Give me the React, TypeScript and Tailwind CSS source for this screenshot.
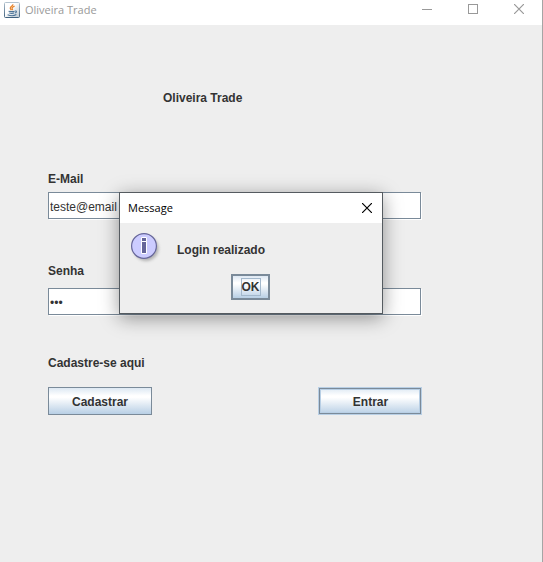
import type { ReactNode } from "react";

function JavaIcon() {
  return (
    <svg width="16" height="16" viewBox="0 0 16 16" aria-hidden="true">
      <defs>
        <linearGradient id="javaFrame" x1="0" y1="0" x2="0" y2="1">
          <stop offset="0" stopColor="#b3c3cf" />
          <stop offset="1" stopColor="#3f617f" />
        </linearGradient>
        <linearGradient id="javaFill" x1="0" y1="0" x2="1" y2="1">
          <stop offset="0.4" stopColor="#ffffff" />
          <stop offset="1" stopColor="#b9c6d0" />
        </linearGradient>
      </defs>
      <rect x="0.5" y="0.5" width="15" height="15" rx="1" fill="url(#javaFill)" stroke="url(#javaFrame)" />
      <path d="M8.8 2.2C9.4 4 6 4.6 6.3 6.3c.1.7.8 1.2 1 1.9M10.6 4.2C9 4.8 7.8 5.4 8.1 6.4c.2.6.7.9.2 1.7" fill="none" stroke="#e8852c" strokeWidth="1.3" />
      <path d="M4.6 9.2c2 .6 4.5.5 6 0M5.3 11.1c1.6.5 3.5.5 4.7 0M11 9c1.9-.4 1.9 1.5-.2 2M3.6 12.8c2.5 1 6.6 1 8.8-.2" fill="none" stroke="#4b7397" strokeWidth="1.1" />
    </svg>
  );
}

function InfoIcon() {
  return (
    <svg width="32" height="32" viewBox="0 0 32 32" className="shrink-0" aria-hidden="true">
      <defs>
        <filter id="infoShadow" x="-20%" y="-20%" width="150%" height="150%">
          <feGaussianBlur stdDeviation="1.5" />
        </filter>
      </defs>
      <circle cx="15" cy="15.5" r="12.5" fill="#777777" opacity="0.5" filter="url(#infoShadow)" />
      <circle cx="13" cy="13" r="12.4" fill="#ccccff" stroke="#666699" strokeWidth="1.2" />
      <path d="M10.5 4.5h5v4h-5zM10.5 8.5h5v12h-5z" fill="#666699" stroke="#ffffff" />
    </svg>
  );
}

function CloseGlyph({ color }: { color: string }) {
  return (
    <svg width="10" height="10" viewBox="0 0 10 10" aria-hidden="true">
      <path d="M0 0L10 10M10 0L0 10" stroke={color} strokeWidth="1.2" />
    </svg>
  );
}

function WindowButton({ label, children }: { label: string; children: ReactNode }) {
  return (
    <button type="button" aria-label={label} className="flex h-[18px] w-[46px] items-center justify-center">
      {children}
    </button>
  );
}

type FieldProps = { id: string; label: string; type: string; value: string; gap: string };

function Field({ id, label, type, value, gap }: FieldProps) {
  return (
    <div className={`flex flex-col pr-px ${gap}`}>
      <label htmlFor={id}>{label}</label>
      <input
        id={id}
        type={type}
        defaultValue={value}
        className="h-[27px] w-full border border-[#7a8a99] bg-white px-px pt-0.5 font-normal shadow-[1px_1px_0_#ffffff] outline-none"
      />
    </div>
  );
}

const metal = "bg-[linear-gradient(to_bottom,#dde8f3_0%,#ffffff_30%,#ffffff_36%,#b8cfe5_100%)]";

function MessageDialog() {
  return (
    <div
      role="dialog"
      aria-labelledby="dialog-title"
      className="absolute top-[192px] left-[119px] w-[264px] border border-[#555b60] bg-[#eeeeee] shadow-[0_4px_18px_rgba(0,0,0,0.4)]"
    >
      <div className="flex h-[30px] items-center justify-between bg-white pr-[10px] pl-2">
        <h2 id="dialog-title" className="font-['Open_Sans','Noto_Sans',sans-serif] text-[11px] font-normal text-black">Message</h2>
        <button type="button" aria-label="Fechar"><CloseGlyph color="#000000" /></button>
      </div>
      <div className="flex gap-3.5 pl-[11px]">
        <div className="pt-[10px]"><InfoIcon /></div>
        <p className="pt-[19px]">Login realizado</p>
      </div>
      <div className="flex justify-center pt-[9px] pr-px pb-[13px]">
        <button type="button" className={`flex h-[26px] w-[39px] items-center justify-center border-2 border-[#7a8a99] ${metal}`}>
          <span className="border border-[#a3b8cc] pt-px leading-[15px]">OK</span>
        </button>
      </div>
    </div>
  );
}

export default function App() {
  return (
    <div className="relative flex min-h-screen flex-col border-r border-[#a5a5a5] bg-[#eeeeee] font-['Liberation_Sans',Arial,sans-serif] text-xs font-bold text-[#333333]">
      <header className="flex h-[25px] items-start justify-between bg-white pl-1">
        <div className="flex items-center gap-[5px] pt-px">
          <JavaIcon />
          <span className="font-['Open_Sans','Noto_Sans',sans-serif] text-[11px] leading-[18px] font-normal text-[#999999]">Oliveira Trade</span>
        </div>
        <div className="flex">
          <WindowButton label="Minimizar"><span className="h-px w-[10px] bg-[#999999]" /></WindowButton>
          <WindowButton label="Maximizar"><span className="size-[10px] border border-[#999999]" /></WindowButton>
          <WindowButton label="Fechar janela"><CloseGlyph color="#999999" /></WindowButton>
        </div>
      </header>
      <main className="flex flex-col pt-[65px] pr-[120px] pl-12">
        <h1 className="pl-[115px]">Oliveira Trade</h1>
        <form className="flex flex-col pt-[65px]" onSubmit={(event) => event.preventDefault()}>
          <div className="flex flex-col gap-11">
            <Field id="email" label="E-Mail" type="email" value="teste@email" gap="gap-[5px]" />
            <Field id="senha" label="Senha" type="password" value="123" gap="gap-[9px]" />
          </div>
          <p className="pt-10">Cadastre-se aqui</p>
          <div className="flex justify-between pt-4">
            <button type="button" className={`h-7 w-[104px] border border-[#7a8a99] pt-0.5 ${metal}`}>Cadastrar</button>
            <button type="submit" className={`h-7 w-[104px] border border-[#b8cfe5] ${metal}`}>
              <span className="flex h-full items-center justify-center border border-[#7a8a99] pt-0.5 pl-px shadow-[inset_0_0_0_1px_#b8cfe5]">Entrar</span>
            </button>
          </div>
        </form>
      </main>
      <MessageDialog />
    </div>
  );
}
